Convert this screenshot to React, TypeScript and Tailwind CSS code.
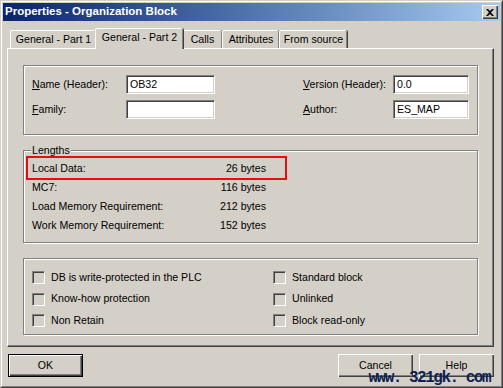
import React from 'react';

const font = { fontFamily: '"Liberation Sans", Arial, sans-serif' };

const Groove = ({ className = '', children }: { className?: string; children?: React.ReactNode }) => (
  <div className={'relative border border-[#808080] shadow-[inset_1px_1px_0_#fff,1px_1px_0_#fff] ' + className}>
    {children}
  </div>
);

const Field = ({ value, width }: { value: string; width: string }) => (
  <div
    className={
      'h-[19px] border border-t-[#808080] border-l-[#808080] border-b-white border-r-white bg-white pl-[3px] leading-[17px] shadow-[inset_1px_1px_0_#404040,inset_-1px_-1px_0_#d4d0c8] ' +
      width
    }
  >
    {value}
  </div>
);

const Check = ({ label }: { label: string }) => (
  <div className="flex h-[21.5px] items-center">
    <span className="h-[13px] w-[13px] border border-t-[#808080] border-l-[#808080] border-b-white border-r-white bg-[#d4d0c8] shadow-[inset_1px_1px_0_#404040,inset_-1px_-1px_0_#d4d0c8]" />
    <span className="ml-[6px]">{label}</span>
  </div>
);

const Btn = ({ label, def }: { label: string; def?: boolean }) => (
  <button
    className={
      'flex h-[23px] w-[75px] items-center justify-center bg-[#d4d0c8] ' +
      (def
        ? 'border border-black shadow-[inset_1px_1px_0_#fff,inset_-1px_-1px_0_#404040,inset_-2px_-2px_0_#808080]'
        : 'shadow-[inset_1px_1px_0_#fff,inset_-1px_-1px_0_#404040,inset_-2px_-2px_0_#808080]')
    }
  >
    {label}
  </button>
);

const tabs = [
  { label: 'General - Part 1', w: 'w-[86px]' },
  { label: 'General - Part 2', w: 'w-[88px]', active: true },
  { label: 'Calls', w: 'w-[40px]' },
  { label: 'Attributes', w: 'w-[57px]' },
  { label: 'From source', w: 'w-[68px]' },
];

const lengths = [
  ['Local Data:', '26 bytes'],
  ['MC7:', '116 bytes'],
  ['Load Memory Requirement:', '212 bytes'],
  ['Work Memory Requirement:', '152 bytes'],
];

export default function App() {
  return (
    <div
      className="relative h-[388px] w-[503px] overflow-hidden border border-t-[#d4d0c8] border-l-[#d4d0c8] border-r-[#404040] border-b-[#404040] bg-[#d4d0c8] text-[10.6px] text-black"
      style={font}
    >
      <div className="flex h-full flex-col border border-t-white border-l-white border-r-[#808080] border-b-[#808080] p-px">
        {/* title bar */}
        <div className="flex h-[18px] items-center justify-between bg-gradient-to-r from-[#0a246a] to-[#a6caf0] pl-[2px] pr-[2px]">
          <span className="text-[11.5px] font-bold text-white">Properties - Organization Block</span>
          <span className="flex h-[14px] w-[16px] items-center justify-center bg-[#d4d0c8] shadow-[inset_1px_1px_0_#fff,inset_-1px_-1px_0_#404040,inset_-2px_-2px_0_#808080]">
            <svg width="8" height="7" viewBox="0 0 8 7">
              <path d="M0 0h2l2 2 2-2h2L5 3.5 8 7H6L4 5 2 7H0l3-3.5z" fill="#000" />
            </svg>
          </span>
        </div>

        {/* tabs */}
        <div className="ml-[7px] mt-[7px] flex h-[20px] items-end">
          {tabs.map((t) => (
            <div
              key={t.label}
              className={
                'flex items-center justify-center rounded-t-[2px] border-l border-t border-white bg-[#d4d0c8] shadow-[inset_-1px_0_0_#808080,1px_0_0_#404040] ' +
                t.w +
                (t.active ? ' relative z-10 -mb-px -mx-[1px] h-[21px] pb-[3px]' : ' h-[18px] pt-px')
              }
            >
              {t.label}
            </div>
          ))}
        </div>

        {/* panel */}
        <div className="ml-[4px] mr-[6px] flex h-[299px] flex-col border border-t-white border-l-white border-r-[#404040] border-b-[#404040] px-[15px] pt-[16px] shadow-[inset_-1px_-1px_0_#808080]">
          <Groove className="h-[70px] px-[8px] pt-[9px]">
            <div className="flex justify-between">
              <div className="flex flex-col gap-[6px]">
                <div className="flex items-center">
                  <span className="w-[94px]"><u>N</u>ame (Header):</span>
                  <Field value="OB32" width="w-[89px]" />
                </div>
                <div className="flex items-center">
                  <span className="w-[94px]"><u>F</u>amily:</span>
                  <Field value="" width="w-[89px]" />
                </div>
              </div>
              <div className="flex flex-col gap-[6px]">
                <div className="flex items-center">
                  <span className="w-[90px]"><u>V</u>ersion (Header):</span>
                  <Field value="0.0" width="w-[76px]" />
                </div>
                <div className="flex items-center">
                  <span className="w-[90px]"><u>A</u>uthor:</span>
                  <Field value="ES_MAP" width="w-[76px]" />
                </div>
              </div>
            </div>
          </Groove>

          <Groove className="mt-[15px] h-[93px] px-[8px] pt-[8px]">
            <span className="absolute -top-[8px] left-[7px] bg-[#d4d0c8] px-px leading-[14px]">Lengths</span>
            <div className="flex w-[234px] flex-col">
              {lengths.map(([k, v]) => (
                <div key={k} className="flex h-[19px] items-center justify-between">
                  <span>{k}</span>
                  <span>{v}</span>
                </div>
              ))}
            </div>
            <div className="absolute left-[2px] top-[5px] h-[24px] w-[261px] border-2 border-[#e01010]" />
          </Groove>

          <Groove className="mt-[15px] h-[77px] px-[8px] pt-[8px]">
            <div className="grid grid-cols-[241px_1fr]">
              <Check label="DB is write-protected in the PLC" />
              <Check label="Standard block" />
              <Check label="Know-how protection" />
              <Check label="Unlinked" />
              <Check label="Non Retain" />
              <Check label="Block read-only" />
            </div>
          </Groove>
        </div>

        {/* buttons */}
        <div className="mt-[7px] flex pl-[5px] pr-[6px]">
          <Btn label="OK" def />
          <div className="ml-auto flex gap-[6px]">
            <Btn label="Cancel" />
            <Btn label="Help" />
          </div>
        </div>
      </div>

      <span
        className="absolute bottom-0 right-[12px] text-[16px] font-bold leading-[17px] tracking-[-1.5px] text-[#0e1f52]"
        style={{ fontFamily: '"Liberation Mono", monospace' }}
      >
        www.&nbsp;321gk.&nbsp;com
      </span>
    </div>
  );
}
